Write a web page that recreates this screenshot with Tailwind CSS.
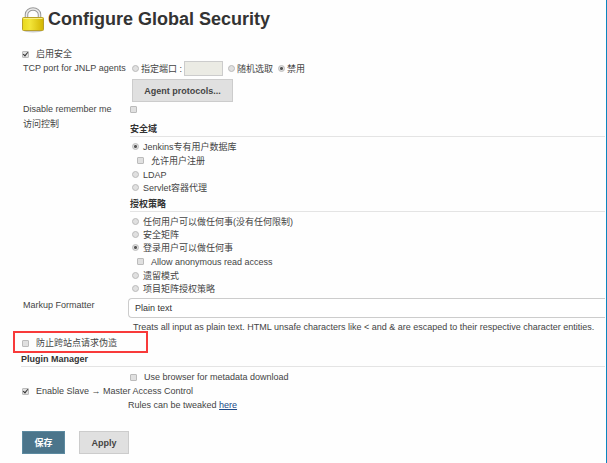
<!DOCTYPE html>
<html lang="zh-CN">
<head>
    <meta charset="UTF-8">
    <meta name="viewport" content="width=device-width, initial-scale=1.0">
    <title>Configure Global Security</title>
    <script src="https://cdn.jsdelivr.net/npm/@tailwindcss/browser@4"></script>
    <style>
        body {
            font-family: 'Liberation Sans', 'Noto Sans CJK SC', sans-serif;
        }
        input[type=radio], input[type=checkbox] {
            appearance: none;
            flex: none;
            width: 7px;
            height: 7px;
            border: 1px solid #bbb;
            background: #e0e0e0;
        }
        input[type=radio] {
            border-radius: 50%;
        }
        input[type=radio]:checked {
            background: radial-gradient(circle, #555 0 1px, #e0e0e0 2px);
        }
        input[type=checkbox] {
            border-radius: 1px;
        }
        input[type=checkbox]:checked::before {
            content: '';
            display: block;
            width: 3px;
            height: 5px;
            margin-left: 1px;
            margin-top: -1px;
            border: solid #333;
            border-width: 0 1px 1px 0;
            transform: rotate(40deg);
        }
    </style>
</head>
<body class="bg-[#fefefe]">
    <form class="min-h-screen border-r border-[#0a86c0] pl-[22px] pr-px pt-[7px] text-[9px] leading-[14px] text-[#444]">
        <header class="flex h-10 items-start gap-1">
            <svg class="h-[26px] w-[22px] shrink-0" viewBox="0 0 22 26">
                <defs>
                    <linearGradient id="gold" x1="0" x2="1" y1="0" y2="0">
                        <stop offset="0" stop-color="#e8d81c"/>
                        <stop offset=".35" stop-color="#f3e63a"/>
                        <stop offset="1" stop-color="#d2b400"/>
                    </linearGradient>
                </defs>
                <ellipse cx="11" cy="24" rx="9" ry="1.5" fill="#ccc"/>
                <path d="M4.5 12V7.500a6.500 5.500 0 0 1 13 0V12" fill="none" stroke="#999" stroke-width="3.500"/>
                <path d="M4.500 12V7.500a6.500 5.500 0 0 1 13 0V12" fill="none" stroke="#ececec" stroke-width="1.500"/>
                <rect x=".5" y="10.500" width="21" height="13" rx="1" fill="url(#gold)" stroke="#b8a02a"/>
                <path d="M1.500 11.500h19" stroke="#f8f08a"/>
            </svg>
            <h1 class="text-lg leading-6 font-bold text-[#333]">Configure Global Security</h1>
        </header>

        <label class="flex items-center gap-[7px]"><input type="checkbox" checked>启用安全</label>

        <div class="flex pl-px">
            <div class="w-[109px] shrink-0">TCP port for JNLP agents</div>
            <div class="flex-1">
                <div class="flex h-[15px] items-center">
                    <label class="flex items-center gap-0.5"><input type="radio" name="port">指定端口 :</label>
                    <input type="text" aria-label="port" disabled class="ml-0.5 h-[15px] w-[39px] border border-[#ccc] bg-[#ebebe4]">
                    <label class="ml-[5px] flex items-center gap-0.5"><input type="radio" name="port">随机选取</label>
                    <label class="ml-[5px] flex items-center gap-0.5"><input type="radio" name="port" checked>禁用</label>
                </div>
                <button type="button" class="mt-[3px] block h-[23px] w-[101px] border border-[#ccc] bg-[#e0e0e0] font-bold">Agent protocols...</button>
            </div>
        </div>

        <div class="flex items-center pl-px">
            <label for="remember" class="w-[107px] shrink-0">Disable remember me</label>
            <input id="remember" type="checkbox">
        </div>

        <div class="flex pl-px pt-px">
            <div class="w-[107px] shrink-0">访问控制</div>
            <div class="flex-1 pt-[5px]">
                <h2 class="border-b border-[#e4e4e4] font-bold text-[#333]">安全域</h2>
                <div class="pl-0.5 pt-[3px]">
                    <label class="flex h-[13px] items-center gap-1"><input type="radio" name="realm" checked>Jenkins专有用户数据库</label>
                    <label class="flex h-[15px] items-center gap-[7px] pl-[5px]"><input type="checkbox">允许用户注册</label>
                    <label class="flex h-[13px] items-center gap-1"><input type="radio" name="realm">LDAP</label>
                    <label class="flex h-[13px] items-center gap-1"><input type="radio" name="realm">Servlet容器代理</label>
                </div>
                <h2 class="mt-[3px] border-b border-[#e4e4e4] font-bold text-[#333]">授权策略</h2>
                <div class="pl-0.5 pt-[3px]">
                    <label class="flex h-[13px] items-center gap-1"><input type="radio" name="auth">任何用户可以做任何事(没有任何限制)</label>
                    <label class="flex h-[13px] items-center gap-1"><input type="radio" name="auth">安全矩阵</label>
                    <label class="flex h-[13px] items-center gap-1"><input type="radio" name="auth" checked>登录用户可以做任何事</label>
                    <label class="flex h-[15px] items-center gap-[7px] pl-[5px]"><input type="checkbox">Allow anonymous read access</label>
                    <label class="flex h-[13px] items-center gap-1"><input type="radio" name="auth">遗留模式</label>
                    <label class="flex h-[13px] items-center gap-1"><input type="radio" name="auth">项目矩阵授权策略</label>
                </div>
            </div>
        </div>

        <div class="flex pl-px pt-[3px]">
            <label for="formatter" class="w-[105px] shrink-0">Markup Formatter</label>
            <div class="min-w-0 flex-1">
                <select id="formatter" class="block h-5 w-full appearance-none rounded-l-sm border border-r-0 border-[#ccc] bg-white px-1.5 text-[#333]">
                    <option>Plain text</option>
                </select>
                <p class="whitespace-nowrap pl-[5px] pt-0.5">Treats all input as plain text. HTML unsafe characters like &lt; and &amp; are escaped to their respective character entities.</p>
            </div>
        </div>

        <div class="relative pt-0.5">
            <label class="flex items-center gap-[7px]"><input type="checkbox">防止跨站点请求伪造</label>
            <!-- highlight frame -->
            <div class="pointer-events-none absolute -left-[9px] -top-[3px] h-[22px] w-[135px] border-2 border-[#f83a3a]"></div>
        </div>

        <h2 class="mt-0.5 -ml-px border-b border-[#e4e4e4] font-bold text-[#333]">Plugin Manager</h2>
        <label class="flex items-center gap-[7px] pl-[108px] pt-[3px]"><input type="checkbox">Use browser for metadata download</label>
        <label class="flex items-center gap-[7px]"><input type="checkbox" checked>Enable Slave → Master Access Control</label>
        <p class="pl-[106px]">Rules can be tweaked <a href="#" class="text-[#204a87] underline">here</a></p>

        <div class="flex gap-3.5 pt-[19px] pb-2">
            <button type="submit" class="h-[23px] w-[43px] border border-[#5c8aa0] bg-[#4b758b] font-bold text-white">保存</button>
            <button type="button" class="h-[23px] w-[50px] border border-[#ccc] bg-[#e0e0e0] font-bold">Apply</button>
        </div>
    </form>
</body>
</html>
